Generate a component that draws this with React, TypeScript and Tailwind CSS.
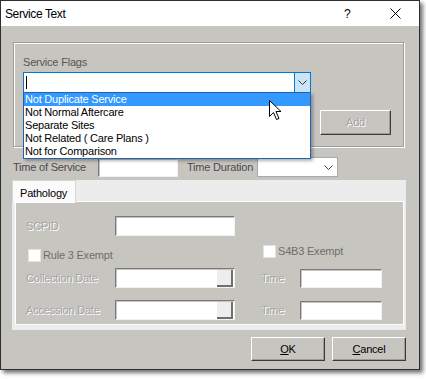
import React from "react";

const flags = [
  "Not Duplicate Service",
  "Not Normal Aftercare",
  "Separate Sites",
  "Not Related ( Care Plans )",
  "Not for Comparison",
];

const dim = "text-[#a4a4a4] [text-shadow:1px_1px_0_#ffffff]";
const sunken =
  "bg-white border border-t-[#7a7a7a] border-l-[#7a7a7a] border-r-[#f2f2f2] border-b-[#f2f2f2] shadow-[inset_1px_1px_0_#c4c4c4]";
const raised =
  "border border-t-white border-l-white border-r-[#3a3a3a] border-b-[#3a3a3a] shadow-[inset_-1px_-1px_0_#9c9c9c] flex items-center justify-center";

function Chevron({ color = "#333333" }: { color?: string }) {
  return (
    <svg width="9" height="5" viewBox="0 0 9 5">
      <path d="M0.5 0.5 L4.5 4.5 L8.5 0.5" fill="none" stroke={color} strokeWidth="1" />
    </svg>
  );
}

function DateField() {
  return (
    <div className={`w-[120px] h-[20px] flex justify-end ${sunken}`}>
      <div className="w-[16px] h-[17px] my-[1px] mr-[1px] bg-[#ededed] border-r-2 border-b-2 border-[#6f6f6f]" />
    </div>
  );
}

function Cursor() {
  return (
    <svg
      className="absolute left-[269px] top-[100px] z-30"
      width="13"
      height="21"
      viewBox="0 0 13 21"
    >
      <path
        d="M0.5 0.5 L0.5 16.5 L4.5 12.5 L7.5 19.5 L10 18.5 L7 11.5 L12 11.5 Z"
        fill="#ffffff"
        stroke="#000000"
        strokeWidth="1"
        strokeLinejoin="round"
      />
    </svg>
  );
}

export default function App() {
  return (
    <div className="w-[426px] h-[379px] bg-white font-['Liberation_Sans',Arial,sans-serif] text-[11px] tracking-[-0.2px] relative">
      <div className="w-[420px] h-[370px] bg-[#c7c5c0] border border-[#2e2e2e] shadow-[3px_3px_4px_rgba(0,0,0,0.55)] flex flex-col">
        {/* title bar */}
        <div className="h-[25px] bg-white flex items-center text-black text-[12px] tracking-[-0.4px]">
          <span className="pl-[4px]">Service Text</span>
          <span className="ml-auto w-[8px]">?</span>
          <svg className="ml-[38px] mr-[18px]" width="11" height="11" viewBox="0 0 11 11">
            <path d="M0.5 0.5 L10.5 10.5 M10.5 0.5 L0.5 10.5" stroke="#000" strokeWidth="1" />
          </svg>
        </div>

        {/* service flags group */}
        <div className="mt-[16px] ml-[12px] w-[391px] h-[105px] border border-[#9d9d9d] shadow-[inset_1px_1px_0_#ffffff,1px_1px_0_#ffffff] flex flex-col pt-[13px] pl-[9px] pr-[12px]">
          <span className="leading-[13px] text-[#555555]">Service Flags</span>
          <div className="relative mt-[3px] w-[288px] h-[21px] border border-[#0078d7] bg-white flex items-center">
            <div className="ml-[2px] w-px h-[13px] bg-black" />
            <div className="ml-auto w-[16px] h-full bg-[#cce4f7] border-l border-[#0078d7] flex items-center justify-center">
              <Chevron />
            </div>
            <div className="absolute -left-px top-[19px] w-[288px] bg-white border border-[#1f64ad] z-20 shadow-[2px_2px_3px_rgba(0,0,0,0.3)] text-black">
              {flags.map((f, i) => (
                <div
                  key={f}
                  className={`h-[13px] leading-[13px] pl-[1px] ${
                    i === 0 ? "bg-[#3399ff] text-white" : ""
                  }`}
                >
                  {f}
                </div>
              ))}
            </div>
          </div>
          <div className={`self-end mt-[17px] w-[71px] h-[25px] ${raised}`}>
            <span className={dim}>Add</span>
          </div>
        </div>

        {/* time row */}
        <div className="mt-[10px] h-[20px] flex items-center text-[#4a4a4a]">
          <span className="ml-[12px] w-[85px]">Time of Service</span>
          <div className={`w-[80px] h-[19px] ${sunken}`} />
          <span className="ml-[9px] w-[70px]">Time Duration</span>
          <div className="w-[81px] h-[20px] bg-white border border-[#a9a9a9] flex items-center justify-end pr-[4px]">
            <Chevron color="#444444" />
          </div>
        </div>

        {/* tab control */}
        <div className="mt-[3px] ml-[11px] w-[394px] h-[150px] bg-[#ececec] flex flex-col">
          <div className="h-[21px] relative">
            <div className="absolute left-0 top-0 w-[64px] h-[23px] bg-[#fbfbfb] border-l border-t border-r border-[#d6d6d6] z-10 pl-[7px] pt-[4px] text-black">
              Pathology
            </div>
          </div>
          <div className="flex-1 ml-[3px] mr-[2px] mb-[5px] border border-white bg-[#c7c5c0] flex flex-col pt-[14px] pl-[10px]">
            <div className="flex items-center h-[20px]">
              <span className={`w-[89px] ${dim}`}>SCPID</span>
              <div className={`w-[120px] h-[20px] ${sunken}`} />
            </div>
            <div className="flex h-[32px] text-[#6d6d6d]">
              <div className="w-[235px] flex items-center mt-[11px] self-start ml-[2px]">
                <div className="w-[13px] h-[13px] bg-white border border-[#e2e2e2]" />
                <span className="ml-[2px]">Rule 3 Exempt</span>
              </div>
              <div className="flex items-center mt-[7px] self-start">
                <div className="w-[13px] h-[13px] bg-white border border-[#e2e2e2]" />
                <span className="ml-[2px]">S4B3 Exempt</span>
              </div>
            </div>
            <div className="flex items-center h-[20px]">
              <span className={`w-[89px] ${dim}`}>Collection Date</span>
              <DateField />
              <span className={`ml-[26px] w-[39px] ${dim}`}>Time</span>
              <div className={`w-[82px] h-[19px] ${sunken}`} />
            </div>
            <div className="flex items-center h-[20px] mt-[12px]">
              <span className={`w-[89px] ${dim}`}>Accession Date</span>
              <DateField />
              <span className={`ml-[26px] w-[39px] ${dim}`}>Time</span>
              <div className={`w-[82px] h-[19px] ${sunken}`} />
            </div>
          </div>
        </div>

        {/* buttons */}
        <div className="mt-[7px] flex justify-end gap-[7px] pr-[13px] text-black">
          <div className={`w-[74px] h-[24px] ${raised}`}>
            <span>
              <span className="underline">O</span>K
            </span>
          </div>
          <div className={`w-[74px] h-[24px] ${raised}`}>
            <span>
              <span className="underline">C</span>ancel
            </span>
          </div>
        </div>
      </div>
      <Cursor />
    </div>
  );
}
